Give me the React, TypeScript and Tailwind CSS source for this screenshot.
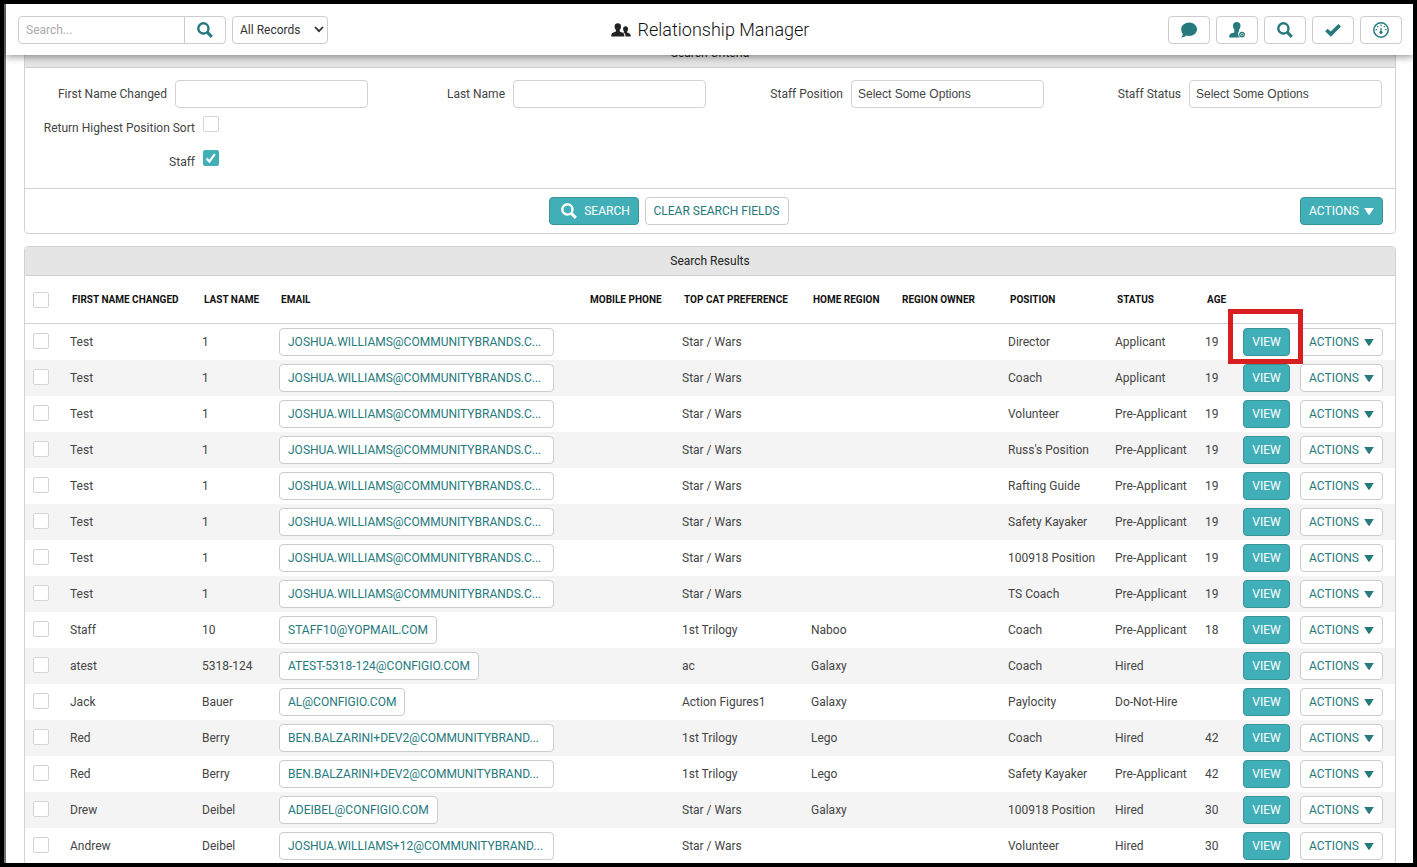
import { useState } from "react";
import type { ReactNode } from "react";

type Row = {
  first: string;
  last: string;
  email: string;
  cat: string;
  home: string;
  position: string;
  status: string;
  age: string;
};

const JW = "JOSHUA.WILLIAMS@COMMUNITYBRANDS.C...";
const BB = "BEN.BALZARINI+DEV2@COMMUNITYBRAND...";

const make = (
  first: string,
  last: string,
  email: string,
  cat: string,
  home: string,
  position: string,
  status: string,
  age: string,
): Row => ({ first, last, email, cat, home, position, status, age });

const rows: Row[] = [
  make("Test", "1", JW, "Star / Wars", "", "Director", "Applicant", "19"),
  make("Test", "1", JW, "Star / Wars", "", "Coach", "Applicant", "19"),
  make("Test", "1", JW, "Star / Wars", "", "Volunteer", "Pre-Applicant", "19"),
  make("Test", "1", JW, "Star / Wars", "", "Russ's Position", "Pre-Applicant", "19"),
  make("Test", "1", JW, "Star / Wars", "", "Rafting Guide", "Pre-Applicant", "19"),
  make("Test", "1", JW, "Star / Wars", "", "Safety Kayaker", "Pre-Applicant", "19"),
  make("Test", "1", JW, "Star / Wars", "", "100918 Position", "Pre-Applicant", "19"),
  make("Test", "1", JW, "Star / Wars", "", "TS Coach", "Pre-Applicant", "19"),
  make("Staff", "10", "STAFF10@YOPMAIL.COM", "1st Trilogy", "Naboo", "Coach", "Pre-Applicant", "18"),
  make("atest", "5318-124", "ATEST-5318-124@CONFIGIO.COM", "ac", "Galaxy", "Coach", "Hired", ""),
  make("Jack", "Bauer", "AL@CONFIGIO.COM", "Action Figures1", "Galaxy", "Paylocity", "Do-Not-Hire", ""),
  make("Red", "Berry", BB, "1st Trilogy", "Lego", "Coach", "Hired", "42"),
  make("Red", "Berry", BB, "1st Trilogy", "Lego", "Safety Kayaker", "Pre-Applicant", "42"),
  make("Drew", "Deibel", "ADEIBEL@CONFIGIO.COM", "Star / Wars", "Galaxy", "100918 Position", "Hired", "30"),
  make("Andrew", "Deibel", "JOSHUA.WILLIAMS+12@COMMUNITYBRAND...", "Star / Wars", "", "Volunteer", "Hired", "30"),
];

const columns = [
  { title: "First Name Changed", width: "w-[132px]" },
  { title: "Last Name", width: "w-[77px]" },
  { title: "Email", width: "w-[309px]" },
  { title: "Mobile Phone", width: "w-[94px]" },
  { title: "Top Cat Preference", width: "w-[129px]" },
  { title: "Home Region", width: "w-[89px]" },
  { title: "Region Owner", width: "w-[108px]" },
  { title: "Position", width: "w-[107px]" },
  { title: "Status", width: "w-[90px]" },
  { title: "Age", width: "w-[38px]" },
];

function SearchIcon() {
  return (
    <svg viewBox="0 0 16 16" className="size-4" fill="none" stroke="currentColor" aria-hidden="true">
      <circle cx="6.4" cy="6.4" r="5.1" strokeWidth="2.4" />
      <path d="M10 10 14.8 14.8" strokeWidth="3.1" />
    </svg>
  );
}

function CommentIcon() {
  return (
    <svg viewBox="0 0 16 16" className="size-4" fill="currentColor" aria-hidden="true">
      <path d="M8.2.5C12.600.5 16 3.500 16 7.200s-3.400 6.700-7.800 6.700c-1 0-2-.2-2.900-.5-1.300 1.200-3 1.900-5.100 2 .9-.9 1.500-2 1.600-3.500C.8 10.700.2 9 .2 7.200.2 3.500 3.800.5 8.200.5z" />
    </svg>
  );
}

function UserAddIcon() {
  return (
    <svg viewBox="0 0 16 16" className="size-4" fill="currentColor" aria-hidden="true">
      <path d="M7.800.1c2.200 0 3.700 1.400 3.700 3.600 0 1.500-.5 2.900-1.400 3.800v1.700c-.8.8-1.100 1.900-1 2.900.1 1.400.8 2.700 1.800 3.400H.2c0-1.900.3-3.400 1.700-3.900l3.400-1.200V7.500c-.9-.9-1.300-2.300-1.300-3.800C4 1.500 5.500.1 7.800.1z" />
      <circle cx="13" cy="12.600" r="2.300" fill="none" stroke="currentColor" strokeWidth="1.200" />
      <path d="M13 11.300v2.600M11.700 12.600h2.600" stroke="currentColor" strokeWidth="0.900" />
    </svg>
  );
}

function CheckIcon() {
  return (
    <svg viewBox="0 0 16 16" className="size-4" fill="none" stroke="currentColor" strokeWidth="3.700" aria-hidden="true">
      <path d="M1.400 8 5.800 12.100 14.700 3.200" />
    </svg>
  );
}

function GaugeIcon() {
  return (
    <svg viewBox="0 0 16 16" className="size-4" fill="none" stroke="currentColor" aria-hidden="true">
      <circle cx="8" cy="8" r="7.200" strokeWidth="1.500" />
      <path d="M8 2.600v1.600M4.200 4.200l1 1M11.800 4.200l-1 1M2.600 7.600h1.500M11.900 7.600h1.500" strokeWidth="1.200" />
      <path d="M8 6v4" strokeWidth="1.200" />
      <circle cx="8" cy="10.400" r="1.300" fill="currentColor" strokeWidth="0.600" />
    </svg>
  );
}

function PeopleIcon() {
  return (
    <svg viewBox="0 0 20 14" className="h-[14px] w-5 text-[#222]" fill="currentColor" aria-hidden="true">
      <path d="M6.800.2c2 0 3.200 1.200 3.200 3.200 0 1.400-.5 2.700-1.300 3.500v1.700l3 1.200c1.500.6 1.700 2 1.700 3.700H.2c0-1.700.200-3.100 1.700-3.700l3-1.200V6.900C4.100 6.100 3.600 4.800 3.600 3.400 3.600 1.400 4.800.2 6.800.2z" />
      <path d="M14.600 3.200c1.500 0 2.500.9 2.500 2.500 0 1.100-.4 2.100-1 2.700v1.100l1.900.8c1.400.6 1.700 1.600 1.700 3.200h-5.200c0-2.300-.6-3.600-2.300-4.300l.9-.4V8.400c-.7-.6-1-1.600-1-2.700 0-1.600.9-2.500 2.500-2.500z" />
    </svg>
  );
}

function Caret() {
  return (
    <svg viewBox="0 0 10 7" className="h-[7px] w-[10px]" fill="currentColor" aria-hidden="true">
      <path d="M.2 0h9.600L5.800 6.200Q5 7.200 4.200 6.200z" />
    </svg>
  );
}

function Tick({ label, id, defaultChecked = false }: { label?: string; id?: string; defaultChecked?: boolean }) {
  const [checked, setChecked] = useState(defaultChecked);
  return (
    <span className="grid size-4 shrink-0">
      <input
        type="checkbox"
        id={id}
        aria-label={label}
        checked={checked}
        onChange={(e) => setChecked(e.target.checked)}
        className="col-start-1 row-start-1 size-4 appearance-none rounded-[2px] border border-[#d4d4d4] bg-white checked:border-[#41afb8] checked:bg-[#41afb8]"
      />
      {checked && (
        <svg
          viewBox="0 0 16 16"
          className="pointer-events-none col-start-1 row-start-1 size-4 text-white"
          fill="none"
          stroke="currentColor"
          strokeWidth="2.200"
          aria-hidden="true"
        >
          <path d="M3.600 8.600 6.400 11.600 11.800 4.200" />
        </svg>
      )}
    </span>
  );
}

const outline =
  "inline-flex h-7 items-center justify-center rounded-[4px] border border-[#ccc] bg-white text-[#26797d] whitespace-nowrap";
const solid =
  "inline-flex h-7 items-center justify-center rounded-[4px] border border-[#37929a] bg-[#41afb8] text-white whitespace-nowrap";

function Panel({ title, children }: { title: string; children: ReactNode }) {
  return (
    <section className="rounded-[4px] border border-[#d2d2d2] bg-white">
      <h2 className="h-[29px] rounded-t-[3px] border-b border-[#d2d2d2] bg-[#e5e5e5] text-center leading-7 text-[#222]">
        {title}
      </h2>
      {children}
    </section>
  );
}

function Field({ id, label, select = false }: { id: string; label: string; select?: boolean }) {
  const box = "h-7 w-[193px] shrink-0 rounded-[4px] border border-[#d2d2d2] bg-white px-[6px] text-[#444]";
  return (
    <div className="flex items-center gap-2">
      <label htmlFor={id} className="flex-1 text-right">
        {label}
      </label>
      {select ? (
        <select id={id} className={`${box} appearance-none font-['Liberation_Sans',sans-serif]`}>
          <option>Select Some Options</option>
        </select>
      ) : (
        <input id={id} type="text" className={box} />
      )}
    </div>
  );
}

function TickField({ id, label, checked = false }: { id: string; label: string; checked?: boolean }) {
  return (
    <div className="col-start-1 flex items-start gap-2">
      <label htmlFor={id} className="flex-1 text-right leading-7">
        {label}
      </label>
      <div className="w-[165px] shrink-0 pt-[2px]">
        <Tick id={id} defaultChecked={checked} />
      </div>
    </div>
  );
}

const tools = [
  { name: "Messages", icon: <CommentIcon /> },
  { name: "Add person", icon: <UserAddIcon /> },
  { name: "Find", icon: <SearchIcon /> },
  { name: "Tasks", icon: <CheckIcon /> },
  { name: "Dashboard", icon: <GaugeIcon /> },
];

export default function App() {
  return (
    <div className="flex h-screen flex-col overflow-hidden border-4 border-black bg-white font-[Roboto,sans-serif] text-[12px] text-[#444]">
      <div className="flex min-h-0 flex-1 flex-col border-l-2 border-[#6d7273]">
        <header className="z-10 grid h-[51px] shrink-0 grid-cols-[1fr_auto_1fr] items-center bg-white pr-[11px] pl-3 shadow-[0_1px_8px_rgba(0,0,0,0.5)]">
          <div className="flex items-center gap-[6px]">
            <form className="flex" onSubmit={(e) => e.preventDefault()}>
              <input
                type="search"
                aria-label="Search"
                placeholder="Search..."
                className="h-7 w-[167px] rounded-l-[4px] border border-[#ccc] px-[7px] placeholder:text-[#aaa]"
              />
              <button
                type="submit"
                aria-label="Search"
                className="-ml-px flex h-7 w-[42px] items-center justify-center rounded-r-[4px] border border-[#ccc] text-[#26797d]"
              >
                <SearchIcon />
              </button>
            </form>
            <div className="grid items-center">
              <select
                aria-label="Record type"
                className="col-start-1 row-start-1 h-7 w-24 appearance-none rounded-[4px] border border-[#ccc] bg-white px-[7px] text-[#333]"
              >
                <option>All Records</option>
              </select>
              <svg
                viewBox="0 0 10 7"
                className="pointer-events-none col-start-1 row-start-1 mr-1 h-[7px] w-[10px] justify-self-end"
                fill="none"
                stroke="#333"
                strokeWidth="1.800"
                aria-hidden="true"
              >
                <path d="M1 1 5 5.200 9 1" />
              </svg>
            </div>
          </div>
          <h1 className="flex items-center gap-[7px] text-[18px] font-light text-[#111]">
            <PeopleIcon />
            Relationship Manager
          </h1>
          <div className="flex justify-end gap-[6px]">
            {tools.map((t) => (
              <button key={t.name} type="button" aria-label={t.name} className={`${outline} w-[42px]`}>
                {t.icon}
              </button>
            ))}
          </div>
        </header>

        <main className="-mt-[17px] flex min-h-0 flex-1 flex-col gap-3 overflow-hidden pr-[17px] pl-[18px] *:shrink-0">
          <Panel title="Search Criteria">
            <div className="grid grid-cols-4 gap-y-[6px] pt-3 pr-[13px] pb-3 pl-[5px]">
              <Field id="first" label="First Name Changed" />
              <Field id="last" label="Last Name" />
              <Field id="staff-position" label="Staff Position" select />
              <Field id="staff-status" label="Staff Status" select />
              <TickField id="highest" label="Return Highest Position Sort" />
              <TickField id="staff" label="Staff" checked />
            </div>
            <div className="flex items-center border-t border-[#d2d2d2] py-2 pr-3 pl-3">
              <div className="flex flex-1 justify-center gap-[6px]">
                <button type="button" className={`${solid} w-[90px] gap-[7px] pl-1`}>
                  <SearchIcon />
                  SEARCH
                </button>
                <button type="button" className={`${outline} px-2`}>
                  CLEAR SEARCH FIELDS
                </button>
              </div>
              <button type="button" className={`${solid} w-[83px] gap-[5px]`}>
                ACTIONS <Caret />
              </button>
            </div>
          </Panel>

          <Panel title="Search Results">
            <table className="w-full table-fixed border-separate border-spacing-0 text-left">
              <thead>
                <tr className="h-12 text-[10px] text-[#111] uppercase [&>th]:border-b [&>th]:border-[#d2d2d2]">
                  <th className="w-[37px] pl-2">
                    <Tick label="Select all" />
                  </th>
                  {columns.map((c) => (
                    <th key={c.title} className={`${c.width} pl-[10px] font-bold whitespace-nowrap`}>
                      {c.title}
                    </th>
                  ))}
                  <th className="w-[57px]" aria-label="View" />
                  <th className="w-[103px]" aria-label="Actions" />
                </tr>
              </thead>
              <tbody className="[&_td]:pl-2 [&_td]:whitespace-nowrap">
                {rows.map((r, i) => (
                  <tr key={i} className="h-9 even:bg-[#f4f4f4]">
                    <td className="pb-[2px]">
                      <Tick label={`Select ${r.first} ${r.last}`} />
                    </td>
                    <td>{r.first}</td>
                    <td>{r.last}</td>
                    <td>
                      <button
                        type="button"
                        className={`${outline} px-2 ${r.email.endsWith("...") ? "w-[275px] !justify-start" : ""}`}
                      >
                        {r.email}
                      </button>
                    </td>
                    <td />
                    <td>{r.cat}</td>
                    <td>{r.home}</td>
                    <td />
                    <td>{r.position}</td>
                    <td>{r.status}</td>
                    <td>{r.age}</td>
                    <td className="relative">
                      <button type="button" className={`${solid} w-[47px]`}>
                        VIEW
                      </button>
                      {i === 0 && (
                        <span className="pointer-events-none absolute -top-[15px] -left-[7px] z-10 h-[55px] w-[75px] border-[5px] border-[#d71f22]" />
                      )}
                    </td>
                    <td>
                      <button type="button" className={`${outline} w-[83px] gap-[5px]`}>
                        ACTIONS <Caret />
                      </button>
                    </td>
                  </tr>
                ))}
              </tbody>
            </table>
          </Panel>
        </main>
      </div>
    </div>
  );
}
